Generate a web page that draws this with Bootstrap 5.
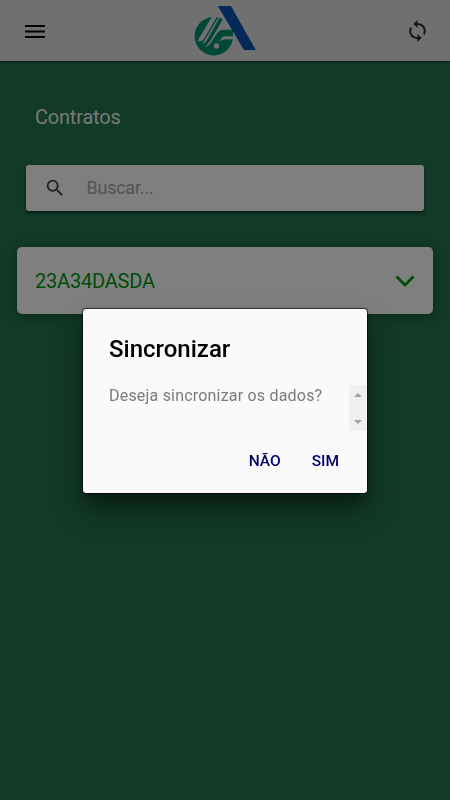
<!DOCTYPE html>
<html lang="pt-BR">
<head>
<meta charset="utf-8">
<meta name="viewport" content="width=device-width, initial-scale=1">
<title>Contratos</title>
<link href="https://cdn.jsdelivr.net/npm/bootstrap@5.3.0/dist/css/bootstrap.min.css" rel="stylesheet">
<style>
body{font-family:Roboto,sans-serif;background:#23744e;height:100vh;overflow:hidden}
svg{display:block}
.topbar{height:61px;background:#e0e0e0;padding:0 21px 0 23px;box-shadow:0 1px 2px rgba(0,0,0,.5)}
.side{width:60px}
.brand-logo{margin:-2px 2px 0 0}
.page-title{font-size:20px;line-height:24px;color:#fff;margin:44px 35px 36px;opacity:.92;letter-spacing:-.2px}
.search{height:46px;margin:0 26px;padding-left:18px;border-radius:3px;box-shadow:0 2px 3px rgba(0,0,0,.5)}
.search-input{border:0;outline:0;background:none;font-size:18px;letter-spacing:-.25px;color:#555;margin-left:20.500px;padding:0 0 1px}
.search-input::placeholder{color:#a6a6a6;opacity:1}
.contract{height:67px;margin:36px 17px 0;padding:0 18px 0 18px;border:0;border-radius:5px;box-shadow:0 3px 12px rgba(0,0,0,.28);color:#009a10;font-size:20px;letter-spacing:-.2px}
.shade{background:rgba(0,0,0,.5);z-index:1}
.sync-dialog{width:284px;height:184px;margin-top:1px;background:#fafafa;border-radius:3px;z-index:2;padding:25px 1px 0 26px;box-shadow:0 0 1px 1px rgba(0,0,0,.65),0 12px 17px -3px rgba(0,0,0,.42),0 16px 34px 2px rgba(0,0,0,.26)}
.sync-title{font-size:24px;line-height:30px;font-weight:500;color:#000;margin:0}
.sync-body{height:46px;margin-top:21px}
.sync-text{font-size:16px;line-height:19px;padding-top:1px;color:#7b7b7b;letter-spacing:.2px;white-space:nowrap}
.scroller{width:17px;height:46px;background:#f0f0f0;padding:8px 0 7px}
.sync-action{border:0;background:none;padding:0;font-size:15.500px;line-height:20px;font-weight:500;color:#000066}
.sync-actions{gap:31px;padding-right:27px;margin-top:20px}
</style>
<script src="https://cdn.jsdelivr.net/npm/bootstrap@5.3.0/dist/js/bootstrap.bundle.min.js"></script>
</head>
<body>
<header class="topbar d-flex align-items-center justify-content-between">
  <div class="side">
    <svg width="24" height="24" viewBox="0 0 24 24"><path d="M2 6h20v2H2zM2 11.500h20v2H2zM2 17h20v2H2z"/></svg>
  </div>
  <svg class="brand-logo" width="64" height="54" viewBox="193 3 64 54">
    <circle cx="213.800" cy="36.200" r="19.200" fill="#009070"/>
    <path d="M220 14h15v16h-12q-4 0-7 5l-6 9q-2.500 3-6 3 3-1 5-5L222 19.500z" fill="#e0e0e0"/>
    <path d="M212 16.500h5L204.500 38q-2 3.500-5.500 3.500-1.500-.5 0-3z" fill="#e0e0e0"/>
    <path d="m218.500 17 1.200.5L207 40q-2 3-5 4 1.500-2 3-4.500z" fill="#e0e0e0"/>
    <path d="m220.500 18.500 2 1.200L212 38q-2.500 5-6 5.500 1.500-1 3-4z" fill="#009070"/>
    <path d="m213 40 4-6q3-4.300 7-4.300h9v6h-9q-4 .3-6 4.300l-2.500 3.500z" fill="#009070"/>
    <path d="M219.500 41.500q2-5.300 6-5.300H235v3h-8.500q-4 0-7 2.300z" fill="#e0e0e0"/>
    <circle cx="216.500" cy="46" r="2.700" fill="#e0e0e0"/>
    <path d="M217.800 6h13.200L255.800 50H244z" fill="#0a54b0"/>
  </svg>
  <div class="side d-flex justify-content-end">
    <svg width="23" height="24" viewBox="1 0 22 24" preserveAspectRatio="none" fill="#303030"><path d="M12 4V1L8 5l4 4V6c3.310 0 6 2.690 6 6 0 1.010-.250 1.970-.700 2.800l1.460 1.460A7.930 7.930 0 0 0 20 12c0-4.420-3.580-8-8-8zm0 14c-3.310 0-6-2.690-6-6 0-1.010.250-1.970.700-2.800L5.240 7.740A7.930 7.930 0 0 0 4 12c0 4.420 3.580 8 8 8v3l4-4-4-4v3z"/></svg>
  </div>
</header>
<main>
  <h1 class="page-title fw-normal">Contratos</h1>
  <div class="search bg-white d-flex align-items-center">
    <svg width="22" height="22" viewBox="0 0 24 24" fill="#404040"><path d="M15.500 14h-.790l-.280-.270A6.470 6.470 0 0 0 16 9.500 6.500 6.500 0 1 0 9.500 16c1.610 0 3.090-.590 4.230-1.570l.270.280v.790l5 4.990L20.490 19l-4.990-5zm-6 0a4.500 4.500 0 1 1 0-9 4.500 4.500 0 0 1 0 9z"/></svg>
    <input class="search-input flex-grow-1" type="text" placeholder="Buscar...">
  </div>
  <div class="contract card flex-row align-items-center justify-content-between">
    <span>23A34DASDA</span>
    <svg width="20" height="14" viewBox="0 0 20 14"><path d="m1.500 2.500 8.500 8.500 8.500-8.500" fill="none" stroke="#009a10" stroke-width="2.800"/></svg>
  </div>
</main>
<div class="shade position-fixed top-0 start-0 w-100 h-100 d-flex align-items-center justify-content-center">
  <div class="sync-dialog" role="dialog">
    <h2 class="sync-title">Sincronizar</h2>
    <div class="sync-body d-flex justify-content-between">
      <span class="sync-text">Deseja sincronizar os dados?</span>
      <div class="scroller d-flex flex-column align-items-center justify-content-between">
        <svg width="8" height="4" viewBox="0 0 8 4" fill="#a3a3a3"><path d="M0 4 4 0l4 4z"/></svg>
        <svg width="8" height="4" viewBox="0 0 8 4" fill="#a3a3a3"><path d="m0 0 4 4 4-4z"/></svg>
      </div>
    </div>
    <div class="sync-actions d-flex justify-content-end">
      <button class="sync-action" type="button">NÃO</button>
      <button class="sync-action" type="button">SIM</button>
    </div>
  </div>
</div>
</body>
</html>
